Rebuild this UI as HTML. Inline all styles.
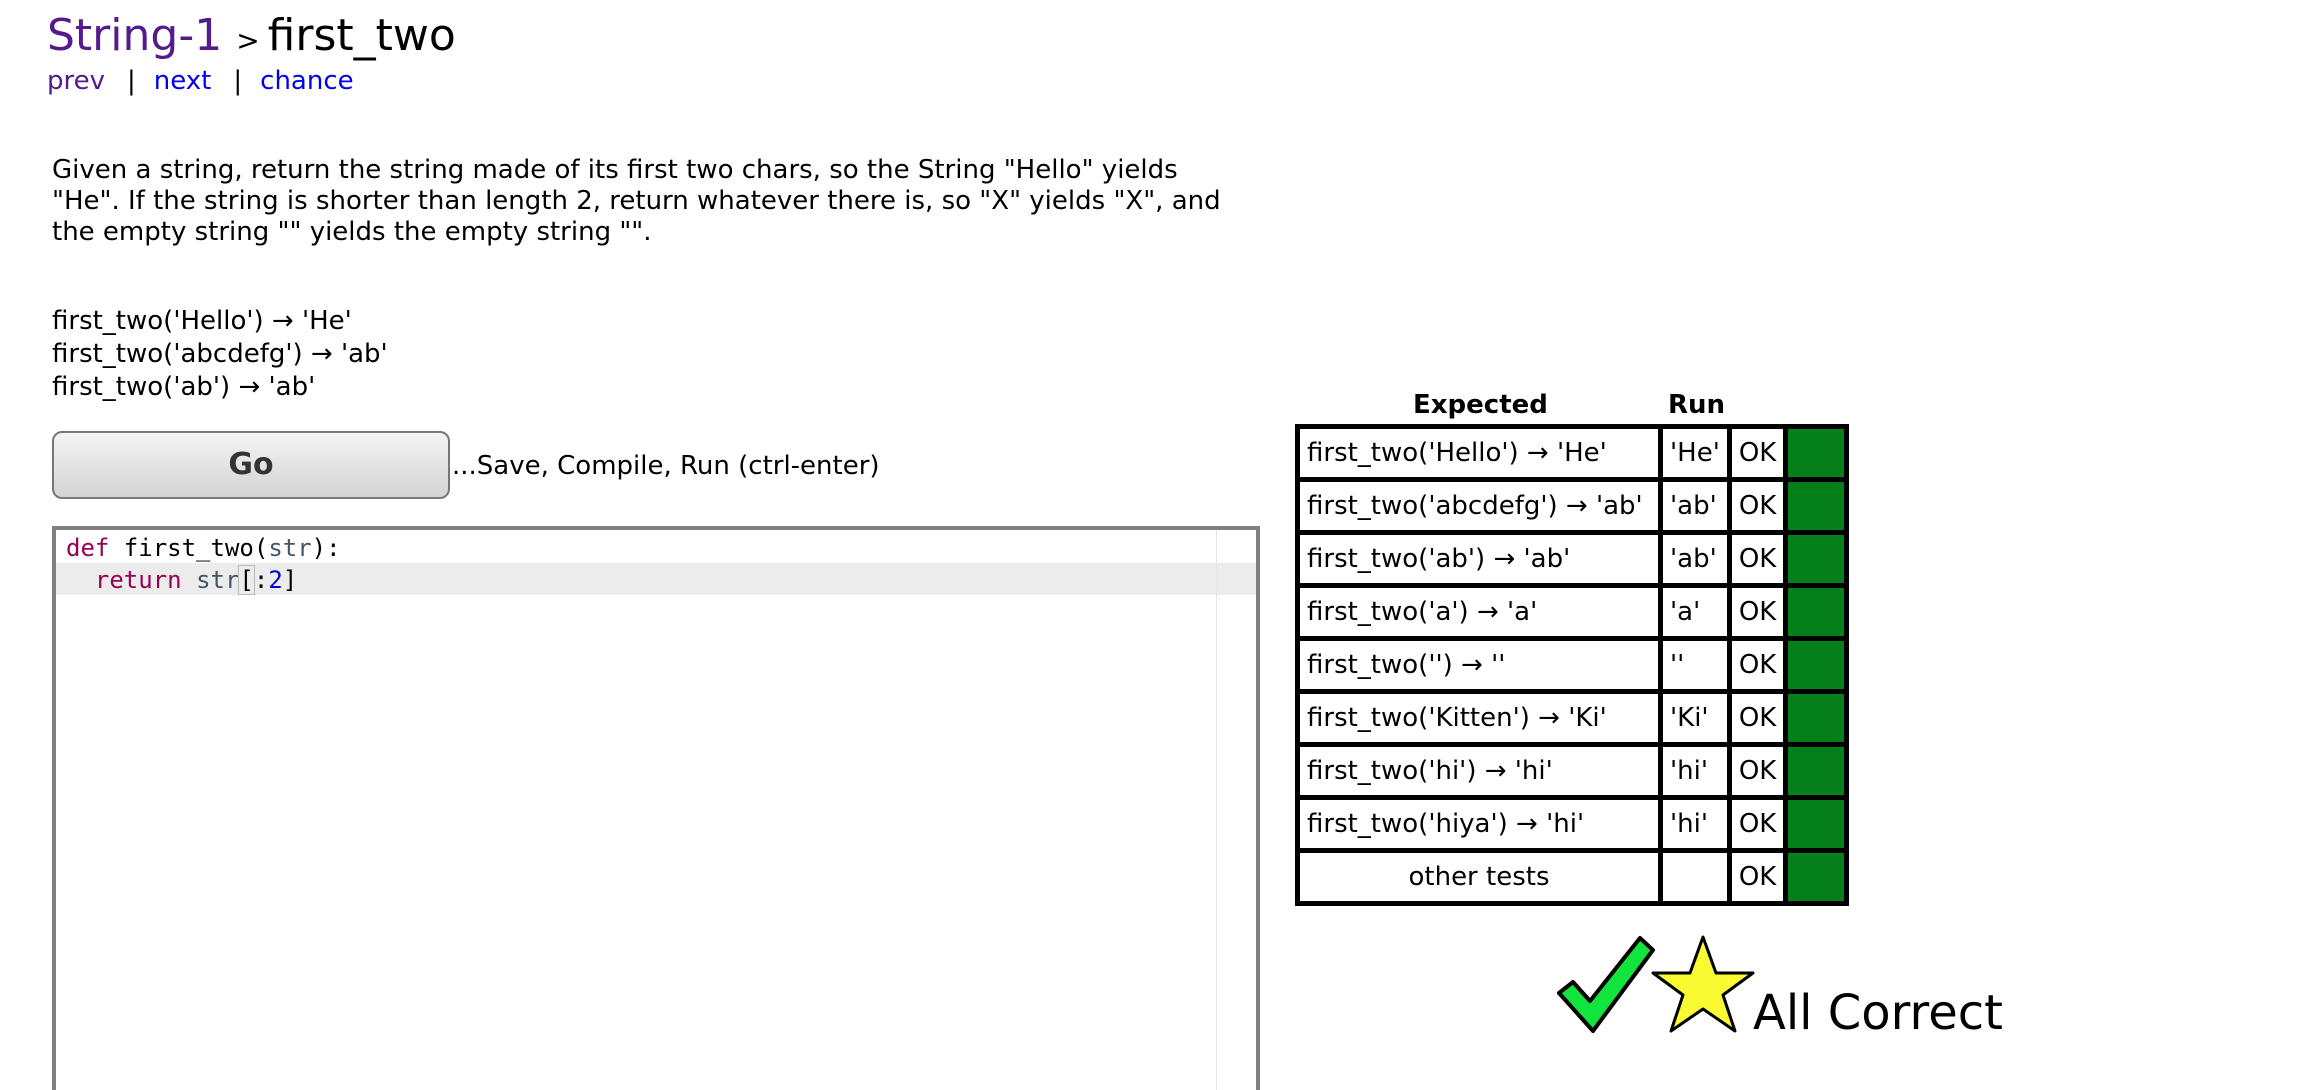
<!DOCTYPE html>
<html><head><meta charset="utf-8"><style>
body{margin:0;background:#fff;width:2316px;height:1074px;overflow:hidden;font-family:"DejaVu Sans","Liberation Sans",sans-serif;color:#000;position:relative}
.a{position:absolute;white-space:nowrap}
.t{font-size:44px}
.nav{font-size:26px}
.d{font-size:26px;line-height:31px}
.go{left:52px;top:431px;width:394px;height:64px;border:2px solid #777;border-radius:10px;background:linear-gradient(#f4f4f4,#d4d4d4);font-weight:bold;font-size:30px;text-align:center;line-height:64px;color:#333}
.ed{left:52px;top:526px;width:1200px;height:560px;border:4px solid #808080;border-bottom:none}
.code{font-family:"DejaVu Sans Mono","Liberation Mono",monospace;font-size:24px}
table{border-collapse:collapse;position:absolute;left:1295px;top:424px}
td{border:5px solid #000;height:48px;font-size:26px;padding:0 7px}
td.g{background:#047f19;width:56px;padding:0}
</style></head><body>
<div class="a t" style="left:47px;top:10px"><span style="color:#551a8b">String-1</span><span style="font-size:28px;margin:0 8px 0 14px">&gt;</span>first_two</div>
<div class="a nav" style="left:47px;top:66px"><span style="color:#551a8b">prev</span><span style="margin:0 18px 0 22px">|</span><span style="color:#00e">next</span><span style="margin:0 18px 0 22px">|</span><span style="color:#00e">chance</span></div>
<div class="a d" style="left:52px;top:155px">Given a string, return the string made of its first two chars, so the String "Hello" yields<br>"He". If the string is shorter than length 2, return whatever there is, so "X" yields "X", and<br>the empty string "" yields the empty string "".</div>
<div class="a d" style="left:52px;top:305px;line-height:33px">first_two('Hello') → 'He'<br>first_two('abcdefg') → 'ab'<br>first_two('ab') → 'ab'</div>
<div class="a go">Go</div>
<div class="a d" style="left:452px;top:451px">...Save, Compile, Run (ctrl-enter)</div>
<div class="a ed">
<div style="position:absolute;left:0;right:0;top:33px;height:32px;background:#ececec"></div>
<div style="position:absolute;left:1160px;top:0;bottom:0;width:1px;background:#e4e4e4"></div>
<div class="a code" style="left:10px;top:2px;line-height:32px"><span style="color:#905">def</span> first_two(<span style="color:#456">str</span>):<br>&nbsp;&nbsp;<span style="color:#905">return</span> <span style="color:#456">str</span><span style="outline:1px solid #bbb">[</span>:<span style="color:#00c">2</span>]</div>
</div>
<div class="a" style="left:1413px;top:390px;font-size:26px;font-weight:bold">Expected</div>
<div class="a" style="left:1668px;top:390px;font-size:26px;font-weight:bold">Run</div>
<table>
<tr><td style="width:344px">first_two('Hello') → 'He'</td><td>'He'</td><td>OK</td><td class="g"></td></tr>
<tr><td>first_two('abcdefg') → 'ab'</td><td>'ab'</td><td>OK</td><td class="g"></td></tr>
<tr><td>first_two('ab') → 'ab'</td><td>'ab'</td><td>OK</td><td class="g"></td></tr>
<tr><td>first_two('a') → 'a'</td><td>'a'</td><td>OK</td><td class="g"></td></tr>
<tr><td>first_two('') → ''</td><td>''</td><td>OK</td><td class="g"></td></tr>
<tr><td>first_two('Kitten') → 'Ki'</td><td>'Ki'</td><td>OK</td><td class="g"></td></tr>
<tr><td>first_two('hi') → 'hi'</td><td>'hi'</td><td>OK</td><td class="g"></td></tr>
<tr><td>first_two('hiya') → 'hi'</td><td>'hi'</td><td>OK</td><td class="g"></td></tr>
<tr><td style="text-align:center">other tests</td><td></td><td>OK</td><td class="g"></td></tr>
</table>
<svg class="a" style="left:1555px;top:933px" width="200" height="102" viewBox="0 0 200 102">
<polygon points="4,60 18,49 35,68 85,5 98,17 38,98" fill="#11e43c" stroke="#000" stroke-width="4" stroke-linejoin="round"/>
<polygon points="148,4 161,40 198,40 168,62 180,98 148,76 116,98 128,62 98,40 135,40" fill="#fafa32" stroke="#000" stroke-width="3" stroke-linejoin="round"/>
</svg>
<div class="a" style="left:1753px;top:987px;font-size:48px;line-height:52px">All Correct</div>
</body></html>
